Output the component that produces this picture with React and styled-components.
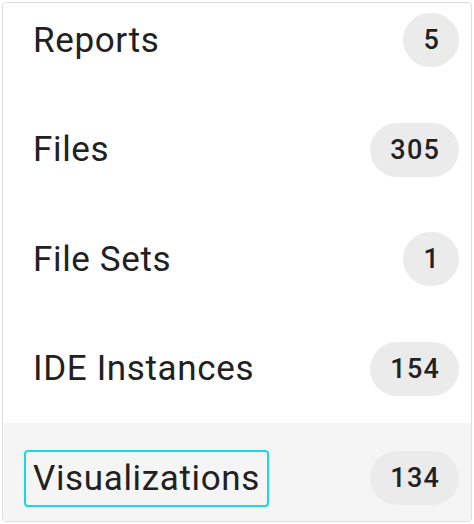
import React from 'react';
import styled, { createGlobalStyle } from 'styled-components';

const GlobalStyle = createGlobalStyle`
  body {
    margin: 0;
    padding: 2px;
    background: #ffffff;
    font-family: Roboto, "Noto Sans", sans-serif;
    color: #212121;
  }
`;

const Card = styled.div`
  width: 470px;
  height: 520px;
  box-sizing: border-box;
  border: 1px solid #dedede;
  border-radius: 4px;
  overflow: hidden;
  background: #ffffff;
`;

const List = styled.ul`
  list-style: none;
  margin: -17.75px 0 0;
  padding: 0;
`;

const Row = styled.li`
  display: flex;
  align-items: center;
  justify-content: space-between;
  height: 109.5px;
  padding: 0 12px 0 21px;
  background: ${(p) => (p.active ? '#f5f5f5' : 'transparent')};
`;

const Label = styled.span`
  font-size: 35px;
  line-height: 53px;
  padding: 0 7px 0 7px;
  border: 2px solid ${(p) => (p.focused ? '#1ad6e6' : 'transparent')};
  border-radius: 4px;
  letter-spacing: 0.65px;
`;

const Count = styled.span`
  display: inline-flex;
  align-items: center;
  justify-content: center;
  box-sizing: border-box;
  min-width: 54px;
  height: 54px;
  padding: 0 19px 0 20px;
  border-radius: 27px;
  background: #ebebeb;
  font-size: 27px;
  font-weight: 500;
  letter-spacing: 1.2px;
  color: #222222;
`;

const items = [
  { name: 'Reports', count: 5 },
  { name: 'Files', count: 305 },
  { name: 'File Sets', count: 1 },
  { name: 'IDE Instances', count: 154 },
  { name: 'Visualizations', count: 134, active: true },
];

const App = () => (
  <>
    <GlobalStyle />
    <Card>
      <List>
        {items.map((item) => (
          <Row key={item.name} active={item.active}>
            <Label focused={item.active}>{item.name}</Label>
            <Count>{item.count}</Count>
          </Row>
        ))}
      </List>
    </Card>
  </>
);

export default App;
